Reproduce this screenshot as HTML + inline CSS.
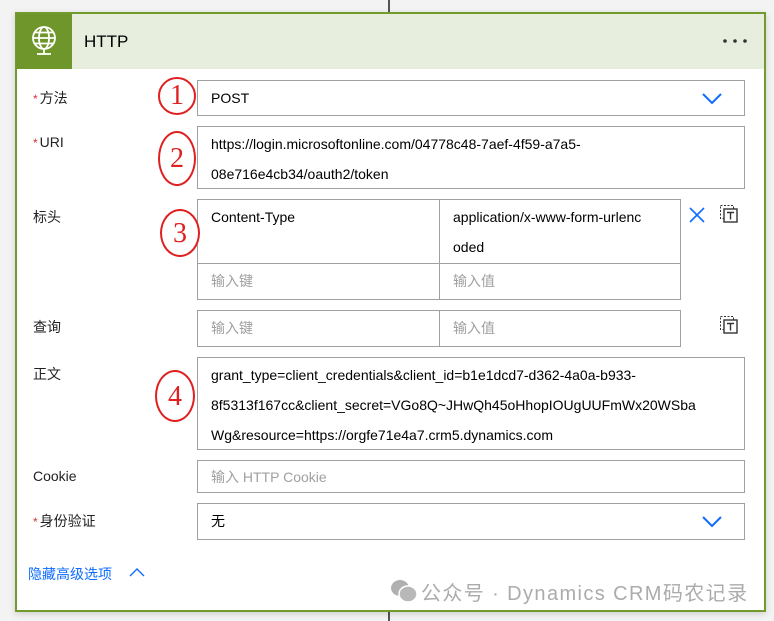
<!DOCTYPE html>
<html><head><meta charset="utf-8"><style>
*{box-sizing:border-box;margin:0;padding:0}
body{width:774px;height:621px;background:#f3f3f3;font-family:"Liberation Sans","Noto Sans CJK SC",sans-serif;font-size:14px;color:#000;position:relative;overflow:hidden}
.card{position:absolute;left:15px;top:12px;width:751px;height:600px;background:#fff;border:2px solid #739a2d;box-shadow:0 2px 6px rgba(0,0,0,.15)}
.hdr{position:absolute;left:16px;top:14px;width:748px;height:55px;background:#e7eedd}
.ico{position:absolute;left:16px;top:14px;width:56px;height:55px;background:#6f962a}
.a{position:absolute}
.lbl{position:absolute;left:33px;font-size:14px;color:#222}
.lbl b{color:#d13438;font-weight:normal;font-size:12px;margin-right:2px}
.box{position:absolute;border:1px solid #a0a0a0;background:#fff;padding:0 13px;line-height:30px}
.ph{color:#a0a0a0}
.circ{position:absolute;width:38px;height:38px;border:2px solid #e02020;border-radius:50%;color:#e02020;font-family:"Liberation Serif",serif;font-size:28px;text-align:center;line-height:34px;background:#fff}
.chev{position:absolute;width:20px;height:12px}
</style></head><body>
<div class="a" style="left:388px;top:0;width:2px;height:12px;background:#555"></div>
<div class="a" style="left:388px;top:611px;width:2px;height:10px;background:#555"></div>
<div class="card"></div>
<div class="hdr"></div>
<div class="ico"><svg width="56" height="55" viewBox="0 0 56 55"><g fill="none" stroke="#fff" stroke-width="1.8"><circle cx="28" cy="24" r="11"/><ellipse cx="28" cy="24" rx="5" ry="11"/><line x1="17" y1="24" x2="39" y2="24"/><line x1="18.5" y1="18.5" x2="37.5" y2="18.5"/><line x1="18.5" y1="29.5" x2="37.5" y2="29.5"/><line x1="28" y1="35" x2="28" y2="40"/><line x1="21" y1="40" x2="35" y2="40"/></g></svg></div>
<div class="a" style="left:84px;top:32px;font-size:17px">HTTP</div>
<svg class="a" style="left:722px;top:38px" width="28" height="6"><circle cx="3" cy="3" r="1.8" fill="#333"/><circle cx="13" cy="3" r="1.8" fill="#333"/><circle cx="23" cy="3" r="1.8" fill="#333"/></svg>

<div class="lbl" style="top:88px"><b>*</b>方法</div>
<div class="circ" style="left:158px;top:77px">1</div>
<div class="box" style="left:197px;top:80px;width:548px;height:36px;line-height:34px">POST</div>
<svg class="chev" style="left:702px;top:93px" viewBox="0 0 20 12"><path d="M1 1 L10 10 L19 1" fill="none" stroke="#0f6cff" stroke-width="2"/></svg>

<div class="lbl" style="top:134px"><b>*</b>URI</div>
<div class="circ" style="left:158px;top:131px;height:55px;width:38px;border-radius:50%;line-height:52px">2</div>
<div class="box" style="left:197px;top:126px;width:548px;height:63px;padding-top:2px">https://login.microsoftonline.com/04778c48-7aef-4f59-a7a5-<br>08e716e4cb34/oauth2/token</div>

<div class="lbl" style="top:207px">标头</div>
<div class="box" style="left:197px;top:199px;width:243px;height:65px;padding-top:2px">Content-Type</div>
<div class="box" style="left:439px;top:199px;width:242px;height:65px;padding-top:2px">application/x-www-form-urlenc<br>oded</div>
<div class="box ph" style="left:197px;top:263px;width:243px;height:37px;line-height:34px">输入键</div>
<div class="box ph" style="left:439px;top:263px;width:242px;height:37px;line-height:34px">输入值</div>
<div class="circ" style="left:160px;top:209px;width:40px;height:48px;line-height:46px">3</div>
<svg class="a" style="left:688px;top:206px" width="18" height="18" viewBox="0 0 18 18"><path d="M2 2 L16 16 M16 2 L2 16" stroke="#0f6cff" stroke-width="1.6"/></svg>
<svg class="a" style="left:719px;top:204px" width="20" height="20" viewBox="0 0 20 20"><rect x="1.5" y="1.5" width="13" height="13" fill="none" stroke="#333" stroke-dasharray="2 1.5"/><rect x="5" y="5" width="13" height="13" fill="#fff" stroke="#333" stroke-width="1.4"/><path d="M8 8.5 H15 M11.5 8.5 V15.5" stroke="#333" stroke-width="1.4"/></svg>

<div class="lbl" style="top:317px">查询</div>
<div class="box ph" style="left:197px;top:310px;width:243px;height:37px;line-height:34px">输入键</div>
<div class="box ph" style="left:439px;top:310px;width:242px;height:37px;line-height:34px">输入值</div>
<svg class="a" style="left:719px;top:315px" width="20" height="20" viewBox="0 0 20 20"><rect x="1.5" y="1.5" width="13" height="13" fill="none" stroke="#333" stroke-dasharray="2 1.5"/><rect x="5" y="5" width="13" height="13" fill="#fff" stroke="#333" stroke-width="1.4"/><path d="M8 8.5 H15 M11.5 8.5 V15.5" stroke="#333" stroke-width="1.4"/></svg>

<div class="lbl" style="top:364px">正文</div>
<div class="circ" style="left:155px;top:370px;width:40px;height:52px;line-height:50px">4</div>
<div class="box" style="left:197px;top:357px;width:548px;height:93px;padding-top:2px">grant_type=client_credentials&amp;client_id=b1e1dcd7-d362-4a0a-b933-<br>8f5313f167cc&amp;client_secret=VGo8Q~JHwQh45oHhopIOUgUUFmWx20WSba<br>Wg&amp;resource=https://orgfe71e4a7.crm5.dynamics.com</div>

<div class="lbl" style="top:468px">Cookie</div>
<div class="box ph" style="left:197px;top:460px;width:548px;height:33px;line-height:32px">输入 HTTP Cookie</div>

<div class="lbl" style="top:511px"><b>*</b>身份验证</div>
<div class="box" style="left:197px;top:503px;width:548px;height:37px;line-height:35px">无</div>
<svg class="chev" style="left:702px;top:516px" viewBox="0 0 20 12"><path d="M1 1 L10 10 L19 1" fill="none" stroke="#0f6cff" stroke-width="2"/></svg>

<div class="a" style="left:28px;top:564px;color:#0f6cff;font-size:14px">隐藏高级选项</div>
<svg class="a" style="left:129px;top:567px" width="16" height="10" viewBox="0 0 16 10"><path d="M1 9 L8 2 L15 9" fill="none" stroke="#0f6cff" stroke-width="1.4"/></svg>

<svg class="a" style="left:390px;top:578px" width="28" height="26" viewBox="0 0 28 26"><ellipse cx="10" cy="10" rx="9" ry="8" fill="#b0b0b0"/><ellipse cx="18" cy="16" rx="9" ry="8" fill="#b8b8b8" stroke="#fff" stroke-width="1.5"/></svg>
<div class="a" style="left:421px;top:577px;font-size:20px;color:#ababab;white-space:nowrap;letter-spacing:1.4px">公众号 · Dynamics CRM码农记录</div>
</body></html>
